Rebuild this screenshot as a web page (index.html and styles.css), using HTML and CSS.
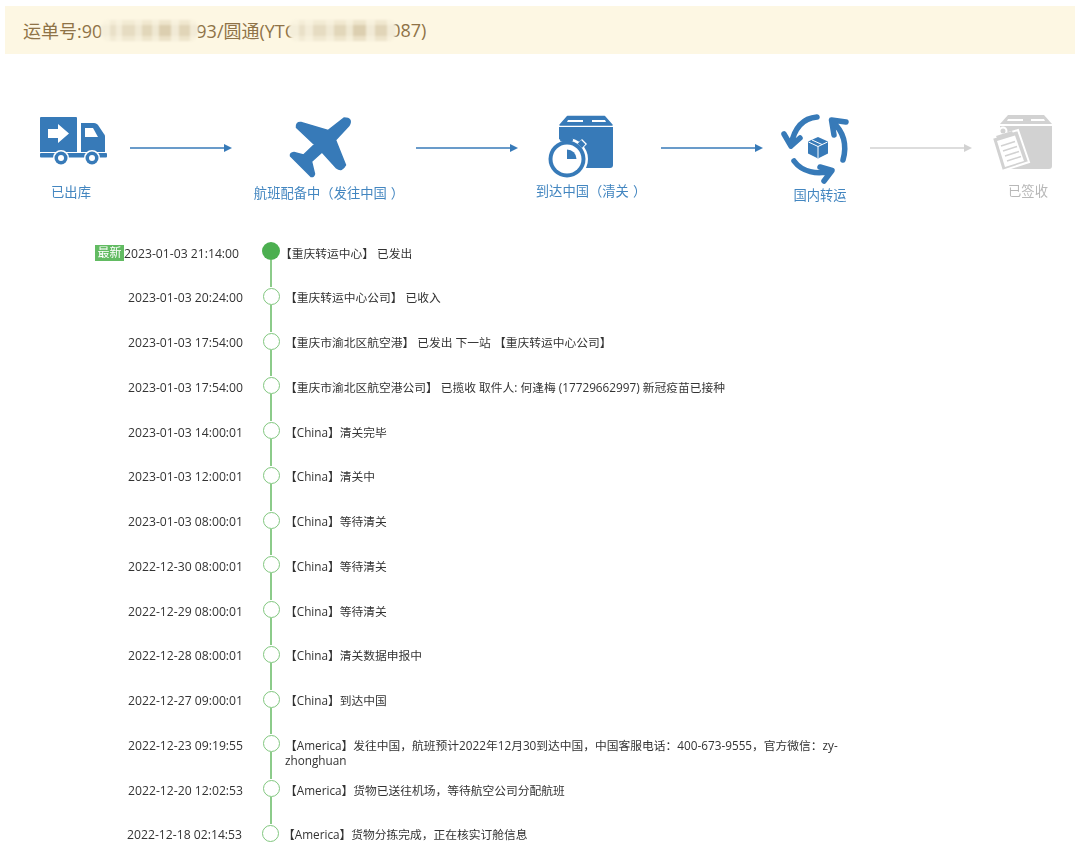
FILE: index.html
```html
<!DOCTYPE html>
<html lang="zh-CN">
<head>
<meta charset="utf-8">
<title>运单详情</title>
<link rel="stylesheet" href="styles.css">
</head>
<body>
<main class="page">
  <header class="waybill">运单号:90<span class="smear smear-a"></span>93/圆通(YTC<span class="smear smear-b"></span>087)</header>

  <section class="steps">
    <div class="step step-out">
      <svg class="icon" viewBox="31 110 80 70">
        <path class="ic" d="M41 117h35a1 1 0 0 1 1 1v34H40v-34a1 1 0 0 1 1-1z"/>
        <path class="ko" d="M48 129h10v-5l11 9.500-11 9.500v-5H48z"/>
        <path class="ic" d="M81 123h13c2 0 3 1 4 2l6 9c1 1 1 2 1 3v15H81z"/>
        <path class="ko" d="M85 128h8l5 9H85z"/>
        <rect class="ic" x="40" y="153" width="67" height="4.500" rx="1"/>
        <circle class="ko" cx="61" cy="158" r="8"/>
        <circle class="ic" cx="61" cy="158" r="6.500"/>
        <circle class="ko" cx="61" cy="158" r="3"/>
        <circle class="ko" cx="92" cy="158" r="8"/>
        <circle class="ic" cx="92" cy="158" r="6.500"/>
        <circle class="ko" cx="92" cy="158" r="3"/>
      </svg>
      <span class="label">已出库</span>
    </div>
    <svg class="arrow arrow-1" viewBox="0 0 102 10"><path class="arrow-line" d="M0 5h95"/><path class="ic" d="M94 1l8 4-8 4z"/></svg>

    <div class="step step-air">
      <svg class="icon" viewBox="247 110 160 70">
        <path class="ic plane" d="M344 118L328 130.500 301 122.500Q296 122 296.500 127.500L314.500 144.500 303.500 155 294 152.500Q290 153 290.500 156L303 168.500 311 176.500Q314 177 314.500 174L311.500 161.500 322 152 336.500 168Q342 172 345.500 165L335.500 140 349 125.500Q353 118 344 118z"/>
      </svg>
      <span class="label">航班配备中（发往中国<span class="paren-close">）</span></span>
    </div>
    <svg class="arrow arrow-2" viewBox="0 0 102 10"><path class="arrow-line" d="M0 5h95"/><path class="ic" d="M94 1l8 4-8 4z"/></svg>

    <div class="step step-port">
      <svg class="icon" viewBox="529 110 120 70">
        <path class="ic soft" d="M567.500 116.500h37l7.500 8.500H560z"/>
        <path class="ko" d="M568 120h15v2h-16zM592 120h13l1 2h-14z"/>
        <path class="ic" d="M559 127h54v38a3 3 0 0 1-3 3h-48a3 3 0 0 1-3-3z"/>
        <circle class="ko" cx="567" cy="159" r="21"/>
        <path class="ko" d="M576 145l6-6 5 5-6 6z"/>
        <rect class="ic" x="578.500" y="141.500" width="6" height="5" transform="rotate(45 581.500 144)"/>
        <rect class="ic" x="560" y="138" width="13" height="3.500" rx="1.500"/>
        <rect class="ic" x="565" y="140" width="4" height="4"/>
        <circle class="ic" cx="567" cy="159" r="18.500"/>
        <circle class="ko" cx="567" cy="159" r="14.500"/>
        <path class="ic" d="M567 149.500a9.500 9.500 0 0 1 9.500 9.500h-9.500z"/>
      </svg>
      <span class="label">到达中国（清关<span class="paren-close">）</span></span>
    </div>
    <svg class="arrow arrow-3" viewBox="0 0 102 10"><path class="arrow-line" d="M0 5h95"/><path class="ic" d="M94 1l8 4-8 4z"/></svg>

    <div class="step step-home">
      <svg class="icon" viewBox="780 110 80 70">
        <path class="arc" d="M817 117C805 118 795 125 791 145M784 134L791 146 800 138"/>
        <path class="arc" d="M843 160C847 146 844 132 832 121M846 122L831.500 120 834 135"/>
        <path class="arc" d="M794 161C802 172 817 175 831 171M820 167L832 170.500 824 181"/>
        <path class="ic" d="M818 137l10 4.500v12l-10 5-10-5v-12z"/>
        <path class="ko-line" d="M808.500 142l9.500 4.500 9.500-4.500M818 146.500V158M812 140l10 4.500"/>
      </svg>
      <span class="label">国内转运</span>
    </div>
    <svg class="arrow arrow-4" viewBox="0 0 102 10"><path class="arrow-line muted-line" d="M0 5h95"/><path class="muted" d="M94 1l8 4-8 4z"/></svg>

    <div class="step step-done">
      <svg class="icon" viewBox="988 110 80 70">
        <path class="muted" d="M1008 115h36l8 9h-52z"/>
        <path class="ko" d="M1008 119h15v2h-16zM1031 119h13l1 2h-14z"/>
        <path class="muted" d="M1000 126h52v40a3 3 0 0 1-3 3h-46a3 3 0 0 1-3-3z"/>
        <path class="muted clip" d="M992 138l26-8 11 32-27 9z"/>
        <circle class="muted clip" cx="1003" cy="131" r="3.500"/>
        <path class="muted" d="M996 136l16-5 2 4-16 5z"/>
        <path class="ko" d="M997 141l18-5.500 9 25.500-19 6z"/>
        <path class="muted-line thin" d="M1001 146l14-4.500M1003 151l14-4.500M1005 156l14-4.500M1007 161l14-4.500"/>
      </svg>
      <span class="label label-muted">已签收</span>
    </div>
  </section>

  <ol class="timeline">
    <li class="row row-latest">
      <div class="time"><span class="badge">最新</span>2023-01-03 21:14:00</div>
      <div class="rail"><span class="dot"></span><span class="line"></span></div>
      <div class="info">【重庆转运中心】 已发出</div>
    </li>
    <li class="row">
      <div class="time">2023-01-03 20:24:00</div>
      <div class="rail"><span class="dot"></span><span class="line"></span></div>
      <div class="info">【重庆转运中心公司】 已收入</div>
    </li>
    <li class="row">
      <div class="time">2023-01-03 17:54:00</div>
      <div class="rail"><span class="dot"></span><span class="line"></span></div>
      <div class="info">【重庆市渝北区航空港】 已发出 下一站 【重庆转运中心公司】</div>
    </li>
    <li class="row">
      <div class="time">2023-01-03 17:54:00</div>
      <div class="rail"><span class="dot"></span><span class="line"></span></div>
      <div class="info">【重庆市渝北区航空港公司】 已揽收 取件人: 何逢梅 (17729662997) 新冠疫苗已接种</div>
    </li>
    <li class="row">
      <div class="time">2023-01-03 14:00:01</div>
      <div class="rail"><span class="dot"></span><span class="line"></span></div>
      <div class="info">【China】清关完毕</div>
    </li>
    <li class="row">
      <div class="time">2023-01-03 12:00:01</div>
      <div class="rail"><span class="dot"></span><span class="line"></span></div>
      <div class="info">【China】清关中</div>
    </li>
    <li class="row">
      <div class="time">2023-01-03 08:00:01</div>
      <div class="rail"><span class="dot"></span><span class="line"></span></div>
      <div class="info">【China】等待清关</div>
    </li>
    <li class="row">
      <div class="time">2022-12-30 08:00:01</div>
      <div class="rail"><span class="dot"></span><span class="line"></span></div>
      <div class="info">【China】等待清关</div>
    </li>
    <li class="row">
      <div class="time">2022-12-29 08:00:01</div>
      <div class="rail"><span class="dot"></span><span class="line"></span></div>
      <div class="info">【China】等待清关</div>
    </li>
    <li class="row">
      <div class="time">2022-12-28 08:00:01</div>
      <div class="rail"><span class="dot"></span><span class="line"></span></div>
      <div class="info">【China】清关数据申报中</div>
    </li>
    <li class="row">
      <div class="time">2022-12-27 09:00:01</div>
      <div class="rail"><span class="dot"></span><span class="line"></span></div>
      <div class="info">【China】到达中国</div>
    </li>
    <li class="row">
      <div class="time">2022-12-23 09:19:55</div>
      <div class="rail"><span class="dot"></span><span class="line"></span></div>
      <div class="info">【America】发往中国，航班预计2022年12月30到达中国，中国客服电话：400-673-9555，官方微信：zy-zhonghuan</div>
    </li>
    <li class="row">
      <div class="time">2022-12-20 12:02:53</div>
      <div class="rail"><span class="dot"></span><span class="line"></span></div>
      <div class="info">【America】货物已送往机场，等待航空公司分配航班</div>
    </li>
    <li class="row row-last">
      <div class="time">2022-12-18 02:14:53</div>
      <div class="rail"><span class="dot"></span></div>
      <div class="info">【America】货物分拣完成，正在核实订舱信息</div>
    </li>
  </ol>
</main>
</body>
</html>
```

FILE: styles.css
```css
* { box-sizing: border-box; }
html, body { margin: 0; padding: 0; background: #fff; }
body { font-family: "Open Sans", "Noto Sans CJK SC", sans-serif; color: #333; }
.page { width: 1080px; filter: blur(0.3px); }

.waybill {
  display: flex;
  align-items: center;
  height: 48px;
  margin: 6px 5px 0;
  padding-left: 18px;
  background: #fdf7e3;
  color: #8f7347;
  font-size: 18px;
  white-space: pre;
}
.smear {
  flex: none;
  height: 21px;
  border-radius: 8px;
  filter: blur(1.2px);
  background:
    linear-gradient(180deg, rgba(253, 247, 227, .55) 0 22%, rgba(253, 247, 227, 0) 22% 78%, rgba(253, 247, 227, .45) 78%),
    linear-gradient(90deg, #f4eeda 0 9%, #e9e0c8 9% 15%, #f3ecd8 15% 22%, #e6dcc2 22% 35%, #f0e9d4 35% 42%, #e2d7ba 42% 53%, #efe8d2 53% 60%, #dccfb0 60% 72%, #f1ead6 72% 80%, #e1d5b8 80% 92%, #f2ebd7 92%);
}
.smear-a { width: 97px; margin: 0 -2px 0 -1px; }
.smear-b { width: 107px; margin: 0 -6px 0 -7px; }

.steps { display: flex; align-items: flex-start; margin-top: 56px; height: 132px; }
.step { display: flex; flex-direction: column; align-items: center; flex: none; }
.icon { display: block; height: 70px; overflow: visible; }
.label { font-size: 13.3px; line-height: 18px; color: #4386c0; white-space: nowrap; }
.label-muted { color: #b8b8b8; }
.paren-close { margin: 0 -4px 0 4px; }

.step-out { width: 80px; margin-left: 31px; }
.step-out .icon { width: 80px; }
.step-out .label { margin-top: 3px; }
.step-air { width: 160px; }
.step-air .icon { width: 160px; }
.step-air .label { margin-top: 4px; }
.step-port { width: 120px; }
.step-port .icon { width: 120px; }
.step-port .label { margin-top: 2px; }
.step-home { width: 80px; }
.step-home .icon { width: 80px; }
.step-home .label { margin-top: 6px; }
.step-done { width: 80px; }
.step-done .icon { width: 80px; }
.step-done .label { margin-top: 2px; }

.ic { fill: #377ab8; }
.ko { fill: #fff; }
.muted { fill: #d2d2d2; }
.plane { stroke: #377ab8; stroke-width: 1.5; stroke-linejoin: round; }
.soft { stroke: #377ab8; stroke-width: 1.5; stroke-linejoin: round; }
.arc { fill: none; stroke: #377ab8; stroke-width: 5.5; stroke-linecap: round; stroke-linejoin: round; }
.ko-line { fill: none; stroke: #fff; stroke-width: 1; }
.clip { stroke: #fff; stroke-width: 2; }
.thin { fill: none; stroke: #d2d2d2; stroke-width: 1.500; }

.arrow { flex: none; display: block; width: 102px; height: 10px; margin-top: 33px; }
.arrow-line { fill: none; stroke: #377ab8; stroke-width: 1.400; }
.muted-line { stroke: #d2d2d2; }
.arrow-1 { margin-left: 19px; margin-right: 15px; }
.arrow-2 { margin-left: 9px; margin-right: 11px; }
.arrow-3 { margin-left: 12px; margin-right: 17px; }
.arrow-4 { margin-left: 10px; margin-right: 16px; }

.timeline { list-style: none; margin: 0; padding: 0; }
.row { display: flex; height: 44.77px; line-height: 15px; }
.time { flex: none; display: flex; align-items: flex-start; justify-content: flex-end; width: 243px; padding-top: 3.5px; font-size: 12.2px; white-space: nowrap; }
.rail { flex: none; display: flex; flex-direction: column; align-items: center; width: 18px; margin-left: 19px; }
.dot { flex: none; width: 17px; height: 17px; margin-top: 1px; border: 1.6px solid #80c67e; border-radius: 50%; background: #fff; }
.line { flex: 1; width: 2px; background: #8ccb8a; }
.info { width: 565px; margin-left: 5px; padding-top: 3.5px; font-size: 11.75px; }

.badge { height: 16px; margin-top: -0.5px; padding: 0 2.500px; background: #62bb62; color: #fff; font-size: 12px; line-height: 16px; }
.row-latest .time { padding-right: 4px; }
.row-latest .dot { width: 18px; height: 18px; margin-top: 0; border: 0; background: #4caf50; }
.row-latest .info { margin-left: 0; }
.row-last { height: auto; margin-left: -1px; }
.row-last .info { margin-left: 4px; }
```
